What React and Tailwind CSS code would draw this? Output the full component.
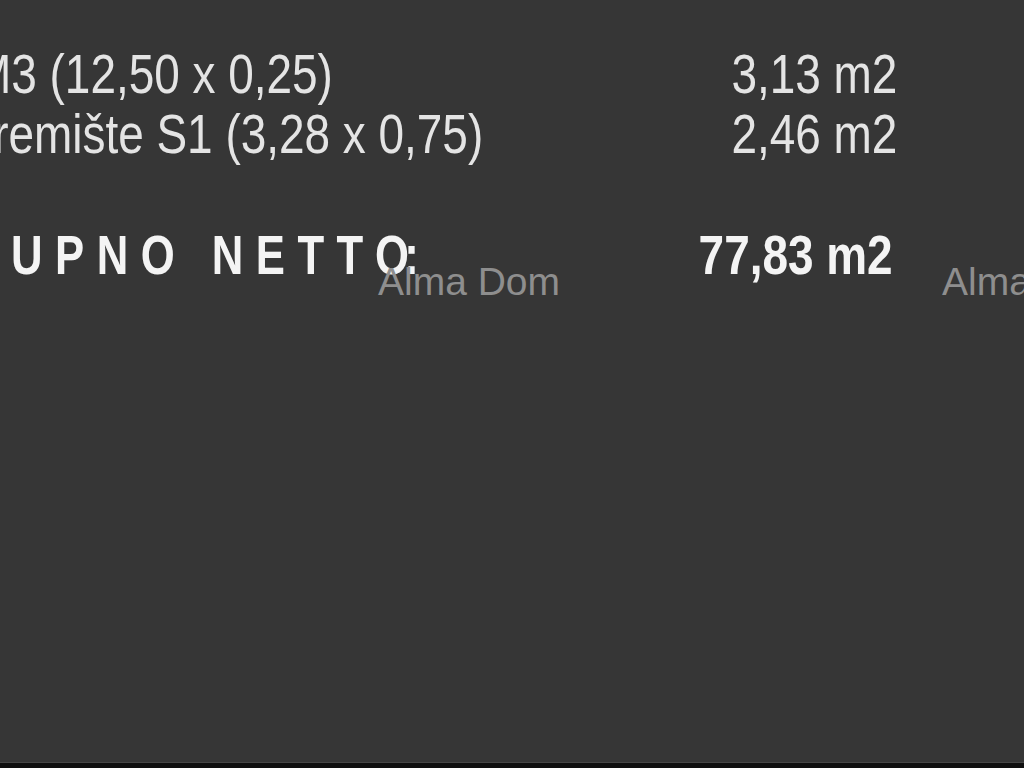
import React from 'react';

// No narrow font installed: Liberation Sans squeezed to Arial Narrow proportions.
const rows = [
  { label: 'M3 (12,50 x 0,25)', value: '3,13 m2', offset: 'ml-[-27px]' },
  { label: 'Spremište S1 (3,28 x 0,75)', value: '2,46 m2', offset: 'ml-[-63px]' },
];

export default function App() {
  return (
    <div className="relative h-[768px] w-[1024px] overflow-hidden bg-[#363636] flex flex-col">
      <div className="flex-1 pt-[44px] pr-[127px] font-['Liberation_Sans',Arial,sans-serif] text-[56px] leading-[60px] text-[#e4e4e4]">
        {rows.map((r) => (
          <div key={r.value} className="flex justify-between whitespace-nowrap">
            <span className={`${r.offset} inline-block origin-left scale-x-[0.82]`}>{r.label}</span>
            <span className="inline-block origin-right scale-x-[0.82]">{r.value}</span>
          </div>
        ))}

        {/* Total */}
        <div className="mt-[61px] flex justify-between whitespace-nowrap font-bold text-[#f4f4f4]">
          <span className="ml-[-77px] inline-block origin-left scale-x-[0.78] tracking-[16px]">
            UKUPNO NETTO<span className="ml-[-22px]">:</span>
          </span>
          <span className="mr-[4px] inline-block origin-right scale-x-[0.82]">77,83 m2</span>
        </div>
      </div>

      {/* Watermarks */}
      <span className="absolute left-[378px] top-[258px] font-['Liberation_Sans',Arial,sans-serif] text-[39px] leading-[48px] text-[#8e8e8e] whitespace-nowrap">
        Alma Dom
      </span>
      <span className="absolute left-[942px] top-[258px] font-['Liberation_Sans',Arial,sans-serif] text-[39px] leading-[48px] text-[#8e8e8e] whitespace-nowrap">
        Alma Dom
      </span>

      <div className="h-px bg-[#474747]" />
      <div className="h-[5px] bg-[#101010]" />
    </div>
  );
}
